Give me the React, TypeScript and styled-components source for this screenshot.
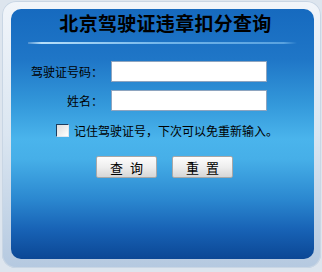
import React from 'react';
import styled, {createGlobalStyle} from "styled-components";

const GlobalStyle = createGlobalStyle`
    html, body {
        margin: 0;
        padding: 0;
        background: #dde5ee;
    }
    body {
        font-family: "Noto Sans CJK SC", "Noto Sans", sans-serif;
    }
`

export default function App() {
    return (
        <>
            <GlobalStyle/>
            <Frame>
                <Panel>
                    <Title>北京驾驶证违章扣分查询</Title>
                    <Glow/>
                    <Form>
                        <Label>驾驶证号码：</Label>
                        <Input type="text"/>
                        <Label>姓名：</Label>
                        <Input type="text"/>
                    </Form>
                    <Remember>
                        <Box/>
                        <span>记住驾驶证号，下次可以免重新输入。</span>
                    </Remember>
                    <Buttons>
                        <Button>查 询</Button>
                        <Button>重 置</Button>
                    </Buttons>
                </Panel>
            </Frame>
        </>
    );
}

const Frame = styled.div`
    margin: 1px 1px 4px 2px;
    height: 250px;
    padding: 8px 7px 9px 9px;
    border-radius: 14px;
    background: linear-gradient(180deg, #f1f5fa 0%, #dbe6f1 50%, #b5c9e0 100%);
    box-shadow: inset 0 0 0 1px #c9d6e4;
`
const Panel = styled.div`
    height: 250px;
    border-radius: 10px;
    background: linear-gradient(180deg,
        #166abf 0%,
        #1f76c7 20%,
        #3398da 38%,
        #4ab4ec 52%,
        #46afe8 60%,
        #2b88d0 76%,
        #1863b6 88%,
        #0b4795 100%);
    display: flex;
    flex-direction: column;
`
const Title = styled.h1`
    margin: 0;
    height: 27px;
    line-height: 28px;
    text-align: center;
    font-size: 19px;
    font-weight: 700;
    color: #000;
    padding-left: 6px;
    letter-spacing: 0.3px;
`
const Glow = styled.div`
    margin: 6px 17px 0;
    height: 2px;
    background: linear-gradient(90deg,
        rgba(255, 255, 255, 0.2) 0%,
        rgba(200, 235, 255, 0.9) 5%,
        rgba(150, 210, 250, 0.7) 50%,
        rgba(150, 210, 250, 0.5) 95%,
        rgba(255, 255, 255, 0) 100%);
`
const Form = styled.div`
    margin-top: 17px;
    display: grid;
    grid-template-columns: 92px 156px;
    column-gap: 8px;
    row-gap: 8px;
    align-items: center;
`
const Label = styled.label`
    text-align: right;
    font-size: 12px;
    color: #000;
`
const Input = styled.input`
    box-sizing: border-box;
    width: 156px;
    height: 21px;
    margin: 0;
    border: 1px solid #8ea4bf;
    background: #fff;
    outline: none;
`
const Remember = styled.div`
    margin: 13px 0 0 45px;
    display: flex;
    align-items: center;
    gap: 5px;
    height: 13px;
    font-size: 12px;
    color: #000;
`
const Box = styled.span`
    box-sizing: border-box;
    width: 13px;
    height: 13px;
    border: 1px solid #1c3d5e;
    border-right-color: #dfe6ee;
    border-bottom-color: #dfe6ee;
    background: linear-gradient(135deg, #dcdcdc, #ffffff);
`
const Buttons = styled.div`
    margin-top: 19px;
    padding-left: 4px;
    display: flex;
    justify-content: center;
    gap: 15px;
`
const Button = styled.button`
    box-sizing: border-box;
    width: 61px;
    height: 22px;
    padding: 0 0 0 2px;
    border: 1px solid #a8a8a8;
    border-radius: 2px;
    background: linear-gradient(180deg, #fdfdfd 0%, #eeeeee 50%, #d6d6d6 100%);
    font-family: "Noto Sans CJK SC", sans-serif;
    font-size: 13px;
    letter-spacing: 2px;
    color: #000;
    white-space: pre;
`
